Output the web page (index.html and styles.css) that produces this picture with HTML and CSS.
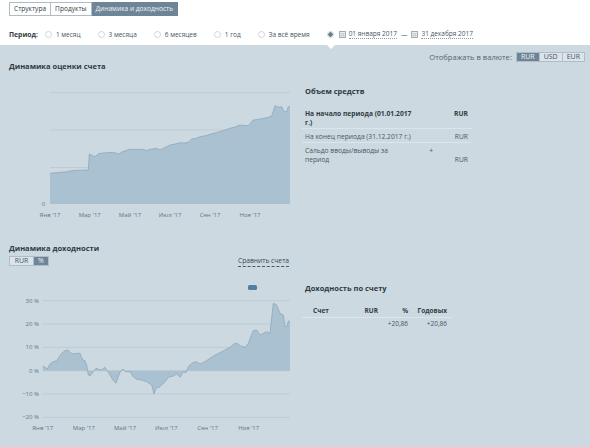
FILE: index.html
```html
<!DOCTYPE html>
<html lang="ru">
<head>
<meta charset="utf-8">
<title>Динамика и доходность</title>
<link rel="stylesheet" href="styles.css">
</head>
<body>
<header class="top">
  <nav class="tabs">
    <span class="tab">Структура</span>
    <span class="tab">Продукты</span>
    <span class="tab active">Динамика и доходность</span>
  </nav>
  <div class="period">
    <span class="period-label">Период:</span>
    <label class="opt"><i class="radio"></i>1 месяц</label>
    <label class="opt"><i class="radio"></i>3 месяца</label>
    <label class="opt"><i class="radio"></i>6 месяцев</label>
    <label class="opt"><i class="radio"></i>1 год</label>
    <label class="opt"><i class="radio"></i>За всё время</label>
    <label class="opt range"><i class="radio on"></i>
      <svg class="cal" width="7" height="7" viewBox="0 0 7 7"><rect x="0.5" y="0.5" width="6" height="6" fill="#eef1f3" stroke="#a3adb4"/><path d="M0.5 2.5H6.5M0.5 4.5H6.5M2.5 2.5V6.5M4.5 2.5V6.5" stroke="#b8c0c6" stroke-width="0.6"/></svg>
      <span class="date">01 января 2017</span>
      <span class="dash">—</span>
      <svg class="cal" width="7" height="7" viewBox="0 0 7 7"><rect x="0.5" y="0.5" width="6" height="6" fill="#eef1f3" stroke="#a3adb4"/><path d="M0.5 2.5H6.5M0.5 4.5H6.5M2.5 2.5V6.5M4.5 2.5V6.5" stroke="#b8c0c6" stroke-width="0.6"/></svg>
      <span class="date">31 декабря 2017</span>
    </label>
  </div>
</header>

<main class="panel">
  <div class="currency">
    <span class="cur-label">Отображать в валюте:</span>
    <div class="seg">
      <span class="seg-btn active">RUR</span>
      <span class="seg-btn">USD</span>
      <span class="seg-btn">EUR</span>
    </div>
  </div>

  <section class="row row-one">
    <div class="left">
      <h2 class="title">Динамика оценки счета</h2>
      <svg class="chart" width="295" height="172" viewBox="0 71 295 172">
        <g stroke="#b9c8d2" stroke-width="0.8">
          <line x1="50" y1="92.7" x2="290" y2="92.7"/>
          <line x1="50" y1="130" x2="290" y2="130"/>
          <line x1="50" y1="167.5" x2="290" y2="167.5"/>
        </g>
        <path fill="#a9c1d1" d="M50,173.3 L56,172.8 L62,172.2 L68,171.6 L72,170.7 L76,170.3 L82,170.2 L88.3,170 L89.3,154 L92,155.5 L95,156.7 L98,154 L100,153.3 L106,152.8 L110,152.6 L113.3,152.3 L116,153.2 L118.3,154 L122,152 L126,150.5 L130,149.3 L136,149.5 L143.3,149.3 L146.7,150.7 L150,149.5 L156.7,148.3 L160,150 L164,148 L170,145 L175,144 L180,142.7 L184,143 L188.3,142.3 L191.7,139 L196,138.5 L200,136.7 L205,135.8 L210,134.3 L215,133 L220,131.7 L225,130 L230,128.3 L235,127 L240,125 L244,125.5 L248.3,125.7 L253.3,120 L258,119.5 L263.3,118.3 L268,117.5 L271.7,116 L275,105.7 L278.3,107.3 L281.7,106.7 L284,111.7 L286.7,111.7 L288.3,106.7 L290,106.7 L290,204 L50,204 Z"/>
        <path fill="none" stroke="#8ea8ba" stroke-width="0.8" d="M50,173.3 L56,172.8 L62,172.2 L68,171.6 L72,170.7 L76,170.3 L82,170.2 L88.3,170 L89.3,154 L92,155.5 L95,156.7 L98,154 L100,153.3 L106,152.8 L110,152.6 L113.3,152.3 L116,153.2 L118.3,154 L122,152 L126,150.5 L130,149.3 L136,149.5 L143.3,149.3 L146.7,150.7 L150,149.5 L156.7,148.3 L160,150 L164,148 L170,145 L175,144 L180,142.7 L184,143 L188.3,142.3 L191.7,139 L196,138.5 L200,136.7 L205,135.8 L210,134.3 L215,133 L220,131.7 L225,130 L230,128.3 L235,127 L240,125 L244,125.5 L248.3,125.7 L253.3,120 L258,119.5 L263.3,118.3 L268,117.5 L271.7,116 L275,105.7 L278.3,107.3 L281.7,106.7 L284,111.7 L286.7,111.7 L288.3,106.7 L290,106.7"/>
        <g class="axis">
          <text x="43.5" y="206.2" text-anchor="middle">0</text>
          <text x="50" y="216.5" text-anchor="middle">Янв '17</text>
          <text x="89.7" y="216.5" text-anchor="middle">Мар '17</text>
          <text x="130" y="216.5" text-anchor="middle">Май '17</text>
          <text x="170" y="216.5" text-anchor="middle">Июл '17</text>
          <text x="210" y="216.5" text-anchor="middle">Сен '17</text>
          <text x="250" y="216.5" text-anchor="middle">Ноя '17</text>
        </g>
      </svg>
    </div>
    <div class="right">
      <h3 class="sub">Объем средств</h3>
      <div class="funds">
        <div class="frow strong">
          <span class="flabel">На начало периода (01.01.2017 г.)</span>
          <span class="fsign"></span>
          <span></span>
          <span class="fcur">RUR</span>
        </div>
        <div class="frow">
          <span class="flabel">На конец периода (31.12.2017 г.)</span>
          <span class="fsign"></span>
          <span></span>
          <span class="fcur low">RUR</span>
        </div>
        <div class="frow last">
          <span class="flabel">Сальдо вводы/выводы за период</span>
          <span class="fsign">+</span>
          <span></span>
          <span class="fcur low">RUR</span>
        </div>
      </div>
    </div>
  </section>

  <section class="row row-two">
    <div class="left">
      <h2 class="title t2">Динамика доходности</h2>
      <div class="tools">
        <div class="seg small">
          <span class="seg-btn">RUR</span>
          <span class="seg-btn active">%</span>
        </div>
        <span class="compare">Сравнить счета</span>
      </div>
      <svg class="chart" width="295" height="181" viewBox="0 266 295 181">
        <rect x="248" y="285" width="9" height="5" rx="1.5" fill="#4f7fa2"/>
        <g stroke="#b9c8d2" stroke-width="0.8">
          <line x1="42.7" y1="300.7" x2="290" y2="300.7"/>
          <line x1="42.7" y1="324" x2="290" y2="324"/>
          <line x1="42.7" y1="347.3" x2="290" y2="347.3"/>
          <line x1="42.7" y1="370.7" x2="290" y2="370.7"/>
          <line x1="42.7" y1="394" x2="290" y2="394"/>
          <line x1="42.7" y1="417.3" x2="290" y2="417.3"/>
        </g>
        <path fill="#a9c1d1" d="M42.7,366 L45,367.3 L47.3,369 L50,364 L53.3,361.7 L56.7,360.7 L59.3,356.7 L61.7,353.3 L65,350.7 L68.3,350 L70,352.7 L73.3,354 L76.7,353.3 L80,353.3 L82.7,360 L85,360.7 L86.7,365 L88.3,375 L90,376 L93.3,371.7 L96,368.3 L98.3,369.3 L101.7,370 L105,367.3 L106.7,370 L110,375 L113.3,380.7 L116,383.3 L118.3,376.7 L120.7,370.7 L123.3,369.3 L126,371.7 L130,371.7 L133.3,376.7 L136.7,379.3 L141.7,380 L146.7,381.7 L151.7,385 L154,394 L156,388.3 L160,386.7 L165,381.7 L168.3,377.3 L173.3,376 L176.7,374 L180,377.3 L183.3,371.7 L186,372.7 L188.3,366.7 L191.7,363.3 L196.7,361.7 L200,364 L205,361.7 L210,358.3 L215,355 L220,352.7 L225,350 L230,347.3 L235,343.3 L238.3,344 L240.7,346 L245,347.3 L248.3,343.3 L253.3,330.7 L256.7,330 L260,335 L263.3,333.3 L266.7,331.7 L270,333.3 L273.3,303.3 L276.7,305 L280,313.3 L283.3,315 L285,326.7 L287.3,326 L288.3,320.7 L290,322.3 L290,370.7 L42.7,370.7 Z"/>
        <path fill="none" stroke="#8ea8ba" stroke-width="0.8" d="M42.7,366 L45,367.3 L47.3,369 L50,364 L53.3,361.7 L56.7,360.7 L59.3,356.7 L61.7,353.3 L65,350.7 L68.3,350 L70,352.7 L73.3,354 L76.7,353.3 L80,353.3 L82.7,360 L85,360.7 L86.7,365 L88.3,375 L90,376 L93.3,371.7 L96,368.3 L98.3,369.3 L101.7,370 L105,367.3 L106.7,370 L110,375 L113.3,380.7 L116,383.3 L118.3,376.7 L120.7,370.7 L123.3,369.3 L126,371.7 L130,371.7 L133.3,376.7 L136.7,379.3 L141.7,380 L146.7,381.7 L151.7,385 L154,394 L156,388.3 L160,386.7 L165,381.7 L168.3,377.3 L173.3,376 L176.7,374 L180,377.3 L183.3,371.7 L186,372.7 L188.3,366.7 L191.7,363.3 L196.7,361.7 L200,364 L205,361.7 L210,358.3 L215,355 L220,352.7 L225,350 L230,347.3 L235,343.3 L238.3,344 L240.7,346 L245,347.3 L248.3,343.3 L253.3,330.7 L256.7,330 L260,335 L263.3,333.3 L266.7,331.7 L270,333.3 L273.3,303.3 L276.7,305 L280,313.3 L283.3,315 L285,326.7 L287.3,326 L288.3,320.7 L290,322.3"/>
        <g class="axis">
          <text x="39" y="302.8" text-anchor="end">30 %</text>
          <text x="39" y="326.1" text-anchor="end">20 %</text>
          <text x="39" y="349.4" text-anchor="end">10 %</text>
          <text x="39" y="372.8" text-anchor="end">0 %</text>
          <text x="39" y="396.1" text-anchor="end">−10 %</text>
          <text x="39" y="419.4" text-anchor="end">−20 %</text>
          <text x="42.7" y="429.6" text-anchor="middle">Янв '17</text>
          <text x="83.9" y="429.6" text-anchor="middle">Мар '17</text>
          <text x="125.1" y="429.6" text-anchor="middle">Май '17</text>
          <text x="166.3" y="429.6" text-anchor="middle">Июл '17</text>
          <text x="207.5" y="429.6" text-anchor="middle">Сен '17</text>
          <text x="248.7" y="429.6" text-anchor="middle">Ноя '17</text>
        </g>
      </svg>
    </div>
    <div class="right r2">
      <h3 class="sub">Доходность по счету</h3>
      <div class="yield">
        <div class="yrow head">
          <span class="c1">Счет</span>
          <span>RUR</span>
          <span>%</span>
          <span>Годовых</span>
        </div>
        <div class="yrow">
          <span class="c1"></span>
          <span></span>
          <span>+20,86</span>
          <span>+20,86</span>
        </div>
      </div>
    </div>
  </section>
</main>
</body>
</html>
```

FILE: styles.css
```css
* { box-sizing: border-box; }

html, body {
  margin: 0;
  padding: 0;
}

body {
  width: 590px;
  height: 447px;
  overflow: hidden;
  background: #ccd9e1;
  font-family: "Open Sans", "Liberation Sans", sans-serif;
  font-size: 7px;
  color: #3b464e;
}

/* ---------- top white area ---------- */
.top {
  background: #fff;
  height: 45px;
  padding: 2px 0 0 9px;
}

.tabs {
  display: flex;
  height: 14px;
}

.tab {
  border: 1px solid #aebcc6;
  padding: 0 4px;
  line-height: 12px;
  font-size: 6.6px;
  color: #333c43;
  background: #fff;
}

.tab + .tab { border-left: none; }

.tab.active {
  background: #6e8597;
  border-color: #6e8597;
  color: #eef2f5;
}

.period {
  display: flex;
  align-items: center;
  height: 10px;
  margin-top: 13px;
  font-size: 6.5px;
  color: #4a5660;
}

.period-label {
  font-weight: 700;
  font-size: 6.8px;
  color: #333c43;
  margin-right: 7px;
}

.opt {
  display: flex;
  align-items: center;
  gap: 4px;
  margin-right: 17px;
  white-space: nowrap;
}

.radio {
  display: block;
  width: 7px;
  height: 7px;
  border: 1px solid #cfd6db;
  border-radius: 50%;
  background: #fff;
}

.radio.on {
  background: radial-gradient(circle, #6b7d8a 0 2px, #fff 2.5px);
  margin-right: 2px;
}

.range { gap: 3px; }

.date {
  color: #4a5660;
  border-bottom: 1px dotted #8d9aa3;
  line-height: 8px;
}

.dash { margin: 0 1px; }

.cal { display: block; }

/* ---------- panel ---------- */
.panel {
  position: relative;
  padding-top: 7px;
}

.panel::before {
  content: "";
  position: absolute;
  left: 327px;
  top: 0;
  border-top: 4px solid #fff;
  border-left: 4px solid transparent;
  border-right: 4px solid transparent;
}

.currency {
  display: flex;
  justify-content: flex-end;
  align-items: center;
  height: 10px;
  margin-right: 5px;
  color: #56636c;
}

.cur-label {
  margin-right: 4px;
  font-size: 7.6px;
}

.seg {
  display: flex;
  border: 1px solid #aebdc8;
  height: 10px;
}

.seg-btn {
  line-height: 8px;
  padding: 0 4px;
  background: #dbe4ea;
  color: #4a5660;
  text-align: center;
}

.seg-btn + .seg-btn { border-left: 1px solid #aebdc8; }

.seg-btn.active {
  background: #6e8597;
  color: #eef2f5;
}

.row {
  display: grid;
  grid-template-columns: 301px 1fr;
}

.row-one { height: 181px; }

.title {
  margin: 0;
  padding-left: 9px;
  font-size: 7.5px;
  line-height: 9px;
  font-weight: 700;
  color: #2f3a42;
}

.t2 { padding-top: 1px; }

.chart {
  display: block;
}

.axis {
  font-family: "Open Sans", "Liberation Sans", sans-serif;
  font-size: 6px;
  fill: #66747e;
}

.right {
  padding-top: 25px;
}

.sub {
  margin: 0 0 0 4px;
  font-size: 7.5px;
  line-height: 9px;
  font-weight: 700;
  color: #2f3a42;
}

.funds {
  margin: 10px 0 0 1px;
  width: 170px;
  color: #4a5660;
  font-size: 6.7px;
}

.frow {
  display: grid;
  grid-template-columns: 106px 22px 1fr auto;
  line-height: 9px;
  padding: 3px 4px 1px 3px;
  border-bottom: 1px solid #dce5ea;
}

.frow.last { border-bottom: none; }

.frow.strong {
  grid-template-columns: 111px 17px 1fr auto;
  font-weight: 700;
  color: #333c43;
}

.fsign { text-align: right; }

.fcur.low { align-self: end; }

/* ---------- yield section ---------- */
.tools {
  display: flex;
  justify-content: space-between;
  align-items: flex-start;
  margin-top: 3px;
  padding: 0 12px 0 9px;
  height: 10px;
}

.seg.small .seg-btn { min-width: 15px; }
.seg.small .seg-btn:first-child { min-width: 23px; }

.compare {
  color: #3b464e;
  font-size: 6.7px;
  line-height: 8px;
  border-bottom: 1px dashed #4a5660;
  padding-bottom: 1px;
  margin-top: 1px;
}

.r2 { padding-top: 41px; }

.yield {
  margin: 13px 0 0 1px;
  width: 150px;
  font-size: 6.5px;
  color: #4a5660;
}

.yrow {
  display: grid;
  grid-template-columns: 38px 38px 30px 39px;
  line-height: 9px;
  padding-right: 5px;
}

.yrow span { text-align: right; }
.yrow .c1 { text-align: center; }

.yrow.head {
  font-weight: 700;
  color: #333c43;
  padding-bottom: 2px;
  border-bottom: 1px solid #dce5ea;
}

.yrow.head + .yrow { padding-top: 1px; }
```
